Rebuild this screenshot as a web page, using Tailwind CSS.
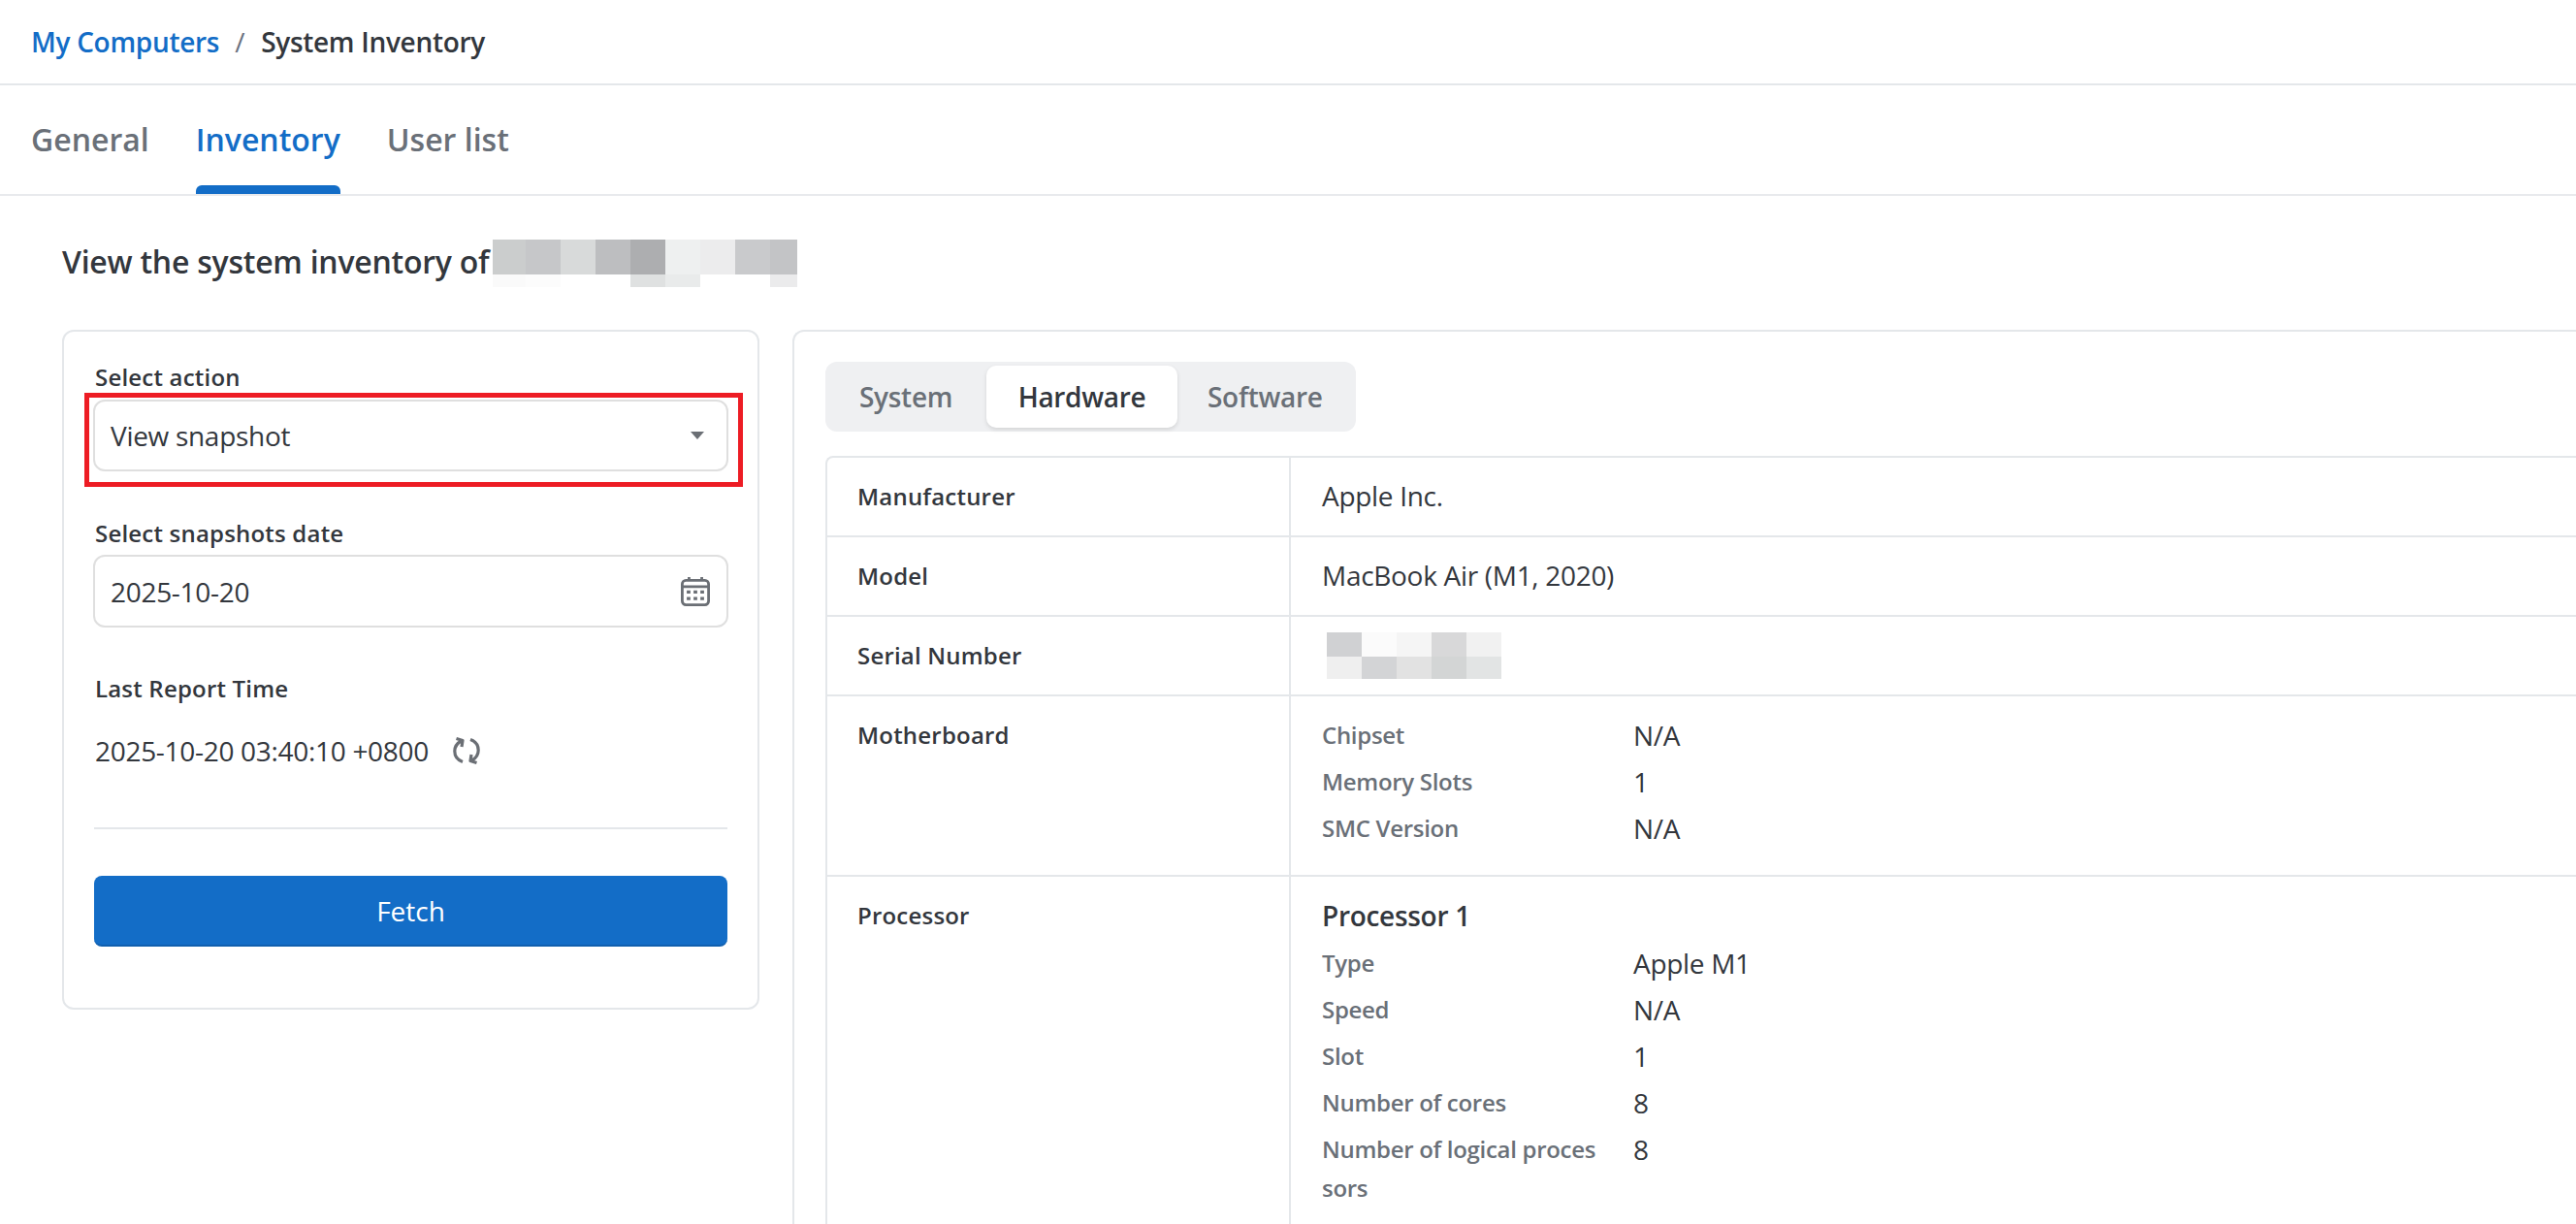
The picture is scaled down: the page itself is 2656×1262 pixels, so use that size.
<!DOCTYPE html>
<html lang="en">
<head>
  <meta charset="UTF-8" />
  <title>System Inventory</title>
  <script src="https://cdn.jsdelivr.net/npm/@tailwindcss/browser@4"></script>
</head>
<body class="bg-white h-[1262px] overflow-hidden font-['Open_Sans',sans-serif] text-[28px] tracking-[-0.3px] text-[#33373d]">
  <div class="h-[88px] border-b-2 border-[#e4e7ea] pl-[32px] flex items-center text-[28px] font-semibold leading-none">
    <a class="text-[#136dc7]">My Computers</a>
    <span class="ml-[16px] mr-[17px] text-[#6b7280] font-normal">/</span>
    <span>System Inventory</span>
  </div>
  <div class="h-[114px] border-b-2 border-[#e8eaed] pl-[32px] flex gap-[48px] text-[32px] font-semibold tracking-normal text-[#6a7078]">
    <a class="h-full flex items-center">General</a>
    <a class="h-full flex items-center text-[#136dc7] relative">Inventory<span class="absolute left-0 right-0 bottom-0 h-[9px] rounded-t-[6px] bg-[#136dc7]"></span></a>
    <a class="h-full flex items-center">User list</a>
  </div>
  <div class="pl-[64px]">
    <div class="h-[138px] flex items-center pb-[3px] text-[32px] font-semibold tracking-[-0.25px]">
      <span>View the system inventory of</span>
      <div class="ml-[4px] grid grid-cols-[34px_36px_36px_36px_36px_36px_36px_36px_28px] grid-rows-[36px_13px] mt-[4px]">
        <i class="bg-[#cbcdcd]"></i><i class="bg-[#c6c7c9]"></i><i class="bg-[#d8dada]"></i><i class="bg-[#bdbec0]"></i><i class="bg-[#adaeb0]"></i><i class="bg-[#eef0f0]"></i><i class="bg-[#ececed]"></i><i class="bg-[#c9cacc]"></i><i class="bg-[#c3c4c6]"></i>
        <i class="bg-[#fafafa]"></i><i class="bg-[#fcfcfc]"></i><i></i><i></i><i class="bg-[#dfe1e1]"></i><i class="bg-[#e9ebeb]"></i><i></i><i></i><i class="bg-[#ebebec]"></i>
      </div>
    </div>
    <div class="flex gap-[34px] items-start">
      <div class="w-[719px] h-[701px] shrink-0 border-2 border-[#e4e7ea] rounded-[12px] px-[31px] pt-[31px]">
        <label class="block pl-[1px] text-[24px] leading-[32px] font-semibold tracking-[0.2px] mb-[7px]">Select action</label>
        <div class="relative -mx-[1px]">
          <div class="h-[74px] border-2 border-[#dfdfdf] rounded-[12px] pl-[16px] pr-[16px] flex items-center justify-between">
            <span>View snapshot</span>
            <svg width="14" height="8" viewBox="0 0 14 8" class="mr-[7px]"><path d="M0 0h14L7 8z" fill="#6b6f75"/></svg>
          </div>
          <div class="absolute -left-[9px] -right-[15px] -top-[7px] -bottom-[16px] border-[5px] border-[#ed1c24]"></div>
        </div>
        <label class="block pl-[1px] text-[24px] leading-[32px] font-semibold tracking-[0.2px] mt-[48px] mb-[6px]">Select snapshots date</label>
        <div class="h-[75px] -mx-[1px] border-2 border-[#dfdfdf] rounded-[12px] pl-[16px] pr-[16px] flex items-center justify-between">
          <span>2025-10-20</span>
          <svg width="30" height="32" viewBox="0 0 32 34" fill="none" class="mr-[1px]">
            <rect x="1.500" y="4.500" width="29" height="27" rx="4" stroke="#6b6f75" stroke-width="3"/>
            <path d="M2 11.500h28M9 1v4M23 1v4" stroke="#6b6f75" stroke-width="3"/>
            <path d="M6.500 17.500h4M14 17.500h4M21.500 17.500h4M6.500 24.500h4M14 24.500h4M21.500 24.500h4" stroke="#6b6f75" stroke-width="3.500"/>
          </svg>
        </div>
        <label class="block pl-[1px] text-[24px] leading-[32px] font-semibold tracking-[0.2px] mt-[47px]">Last Report Time</label>
        <div class="mt-[32px] pl-[1px] h-[32px] flex items-center leading-none">
          <span>2025-10-20 03:40:10 +0800</span>
          <svg width="28" height="28" viewBox="0 0 28 28" fill="none" class="ml-[25px]" stroke="#6b6f75" stroke-width="3.200">
            <path d="M10 25.500C4.500 23.500 1.800 19.500 1.800 14.500C1.800 10 4 6.500 8.500 4"/>
            <path d="M3.500 1.500L10 3.500L9 10" stroke-linejoin="round"/>
            <path d="M18 2.500C23.500 4.500 26.200 8.500 26.200 13.500C26.200 18 24 21.500 19.500 24"/>
            <path d="M24.500 26.500L18 24.500L19 18" stroke-linejoin="round"/>
          </svg>
        </div>
        <div class="mt-[63px] border-t-2 border-[#e4e7ea]"></div>
        <button class="mt-[48px] w-full h-[73px] bg-[#136dc7] border-b-2 border-[#105fae] rounded-[8px] text-white font-medium tracking-normal">Fetch</button>
      </div>
      <div class="flex-1 border-2 border-r-0 border-[#e4e7ea] rounded-l-[12px] pl-[32px] pt-[31px] h-[1000px]">
        <div class="inline-flex items-center h-[72px] bg-[#eff0f2] rounded-[12px] p-[4px] text-[28px] font-semibold text-[#6a7078]">
          <a class="w-[162px] pl-[31px]">System</a>
          <a class="h-[64px] w-[197px] flex items-center justify-center bg-white text-[#33373d] rounded-[10px] shadow-[0_2px_4px_rgba(0,0,0,0.12)]">Hardware</a>
          <a class="w-[180px] pl-[31px]">Software</a>
        </div>
        <div class="mt-[25px] border-t-2 border-l-2 border-[#e4e7ea] rounded-tl-[8px]">
          <div class="flex h-[82px] border-b-2 border-[#e4e7ea]">
            <div class="w-[478px] shrink-0 pl-[31px] pt-[24px] text-[24px] leading-[32px] font-semibold tracking-[0.2px] border-r-2 border-[#e4e7ea]">Manufacturer</div>
            <div class="pl-[32px] pt-[21px] leading-[36px]">Apple Inc.</div>
          </div>
          <div class="flex h-[82px] border-b-2 border-[#e4e7ea]">
            <div class="w-[478px] shrink-0 pl-[31px] pt-[24px] text-[24px] leading-[32px] font-semibold tracking-[0.2px] border-r-2 border-[#e4e7ea]">Model</div>
            <div class="pl-[32px] pt-[21px] leading-[36px]">MacBook Air (M1, 2020)</div>
          </div>
          <div class="flex h-[82px] border-b-2 border-[#e4e7ea]">
            <div class="w-[478px] shrink-0 pl-[31px] pt-[24px] text-[24px] leading-[32px] font-semibold tracking-[0.2px] border-r-2 border-[#e4e7ea]">Serial Number</div>
            <div class="pl-[37px] pt-[16px]">
              <div class="grid grid-cols-[36px_36px_36px_36px_36px] grid-rows-[25px_23px]">
                <i class="bg-[#d0d1d3]"></i><i class="bg-[#fbfbfb]"></i><i class="bg-[#f5f5f5]"></i><i class="bg-[#d8d8d9]"></i><i class="bg-[#f1f1f1]"></i>
                <i class="bg-[#efefef]"></i><i class="bg-[#d3d4d6]"></i><i class="bg-[#e2e2e2]"></i><i class="bg-[#d3d5d5]"></i><i class="bg-[#e2e4e4]"></i>
              </div>
            </div>
          </div>
          <div class="flex h-[186px] border-b-2 border-[#e4e7ea]">
            <div class="w-[478px] shrink-0 pl-[31px] pt-[24px] text-[24px] leading-[32px] font-semibold tracking-[0.2px] border-r-2 border-[#e4e7ea]">Motherboard</div>
            <div class="pl-[32px] pt-[16px] grid grid-cols-[321px_1fr] auto-rows-[48px] items-center">
              <span class="text-[24px] font-semibold text-[#6a7078]">Chipset</span><span>N/A</span>
              <span class="text-[24px] font-semibold text-[#6a7078]">Memory Slots</span><span>1</span>
              <span class="text-[24px] font-semibold text-[#6a7078]">SMC Version</span><span>N/A</span>
            </div>
          </div>
          <div class="flex h-[400px]">
            <div class="w-[478px] shrink-0 pl-[31px] pt-[24px] text-[24px] leading-[32px] font-semibold tracking-[0.2px] border-r-2 border-[#e4e7ea]">Processor</div>
            <div class="pl-[32px] pt-[20px]">
              <div class="font-semibold leading-[40px] mb-[5px]">Processor 1</div>
              <div class="grid grid-cols-[321px_1fr] auto-rows-[48px] items-center">
                <span class="text-[24px] font-semibold text-[#6a7078]">Type</span><span>Apple M1</span>
                <span class="text-[24px] font-semibold text-[#6a7078]">Speed</span><span>N/A</span>
                <span class="text-[24px] font-semibold text-[#6a7078]">Slot</span><span>1</span>
                <span class="text-[24px] font-semibold text-[#6a7078]">Number of cores</span><span>8</span>
                <span class="text-[24px] leading-[40px] font-semibold text-[#6a7078] w-[290px] break-all self-start pt-[4px]">Number of logical processors</span><span class="self-start pt-[4px] leading-[40px]">8</span>
              </div>
            </div>
          </div>
        </div>
      </div>
    </div>
  </div>
</body>
</html>
